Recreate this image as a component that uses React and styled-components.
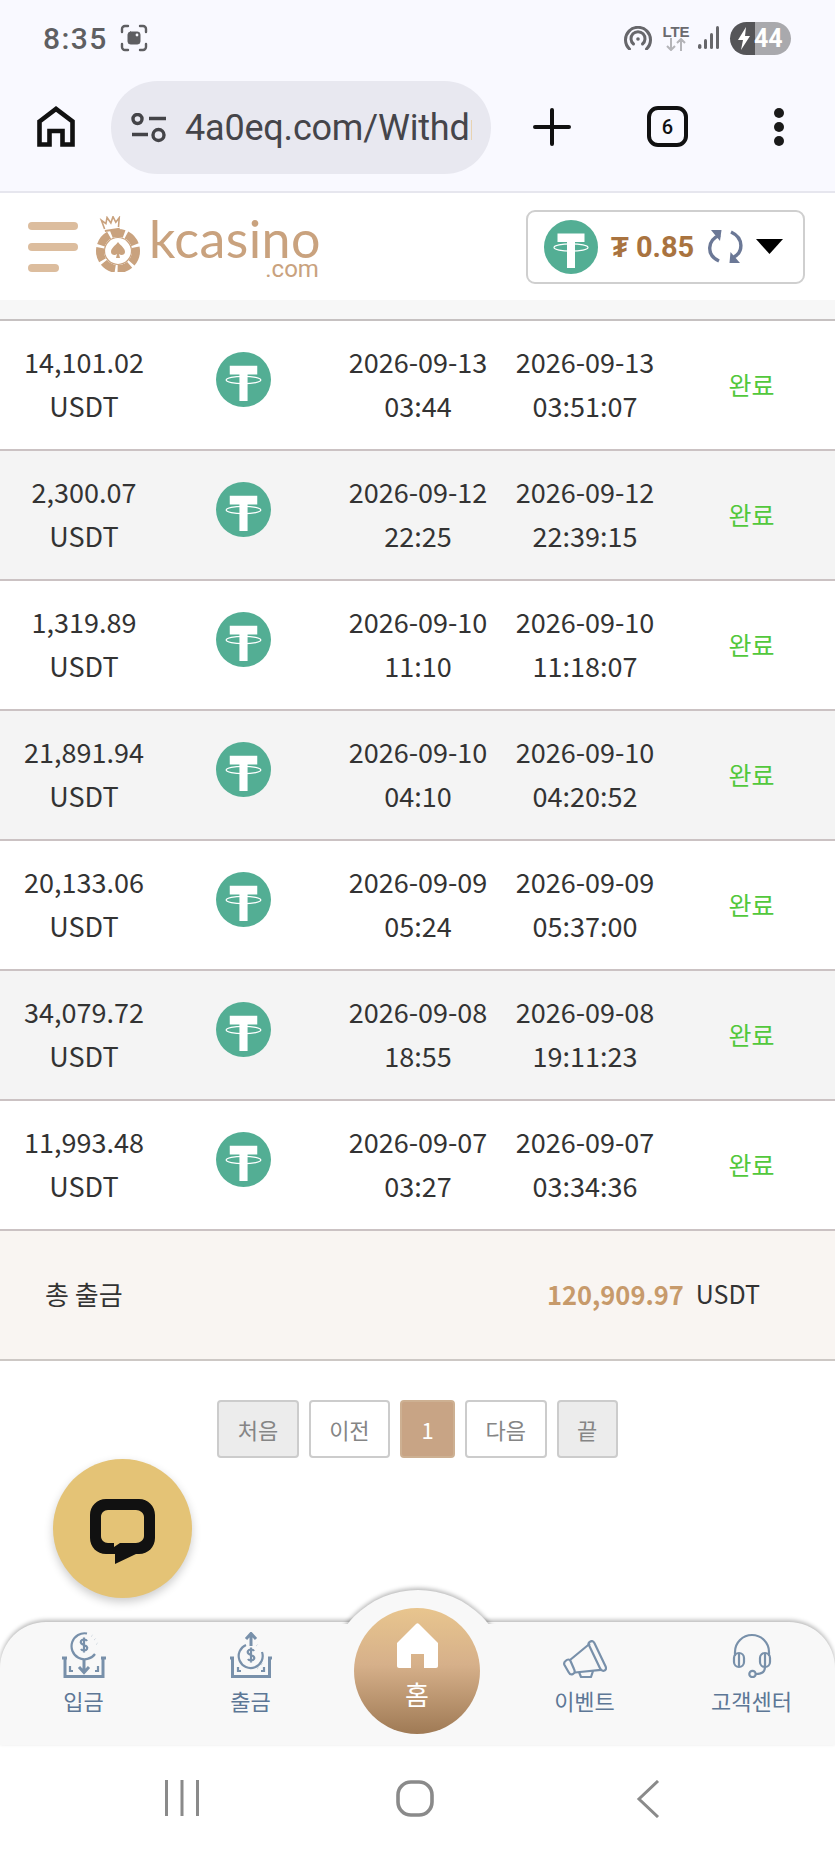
import React from 'react'
import styled, { createGlobalStyle } from 'styled-components'

const GlobalStyle = createGlobalStyle`
  * { box-sizing: border-box; }
  html, body { margin: 0; padding: 0; background: #fff; }
  body { font-family: "Noto Sans CJK KR", "Noto Sans", sans-serif; }
`

const Page = styled.div`
  position: relative;
  width: 835px;
  height: 1856px;
  display: flex;
  flex-direction: column;
  overflow: hidden;
  background: #fff;
`

/* phone status bar */
const StatusBar = styled.div`
  height: 70px;
  flex: none;
  display: flex;
  align-items: center;
  padding: 6px 44px 0 43px;
  background: #f9f9ff;
`
const Time = styled.span`
  font: 500 30px Roboto, sans-serif;
  letter-spacing: 1.4px;
  color: #5f5f62;
  margin-right: 12px;
`
const StatusRight = styled.div`
  margin-left: auto;
  display: flex;
  align-items: center;
`
const Lte = styled.div`
  width: 26px;
  margin: 0 9px 0 11px;
  display: flex;
  flex-direction: column;
  align-items: center;
  font: 700 15px/13px "Liberation Sans", sans-serif;
  color: #6a6a6e;
`
const Battery = styled.div`
  width: 61px;
  height: 33px;
  margin-left: 10px;
  border-radius: 17px;
  display: flex;
  align-items: center;
  padding-left: 7px;
  gap: 3px;
  color: #fff;
  font: 700 25px Roboto, sans-serif;
  background: linear-gradient(to right, #555558 0 41%, #a9a9ad 41%);
`

/* browser toolbar */
const Toolbar = styled.div`
  height: 123px;
  flex: none;
  display: flex;
  align-items: center;
  padding: 0 0 8px 37px;
  background: #f9f9ff;
  border-bottom: 2px solid #e6e6ee;
`
const UrlPill = styled.div`
  width: 380px;
  height: 93px;
  margin-left: 36px;
  margin-top: 2px;
  border-radius: 47px;
  background: #e8e8f0;
  display: flex;
  align-items: center;
  padding-left: 20px;
`
const UrlText = styled.div`
  width: 287px;
  margin-left: 18px;
  overflow: hidden;
  white-space: nowrap;
  font: 400 36px Roboto, sans-serif;
  letter-spacing: -0.2px;
  color: #45454a;
`
const PlusSlot = styled.div`
  margin-left: 42px;
  display: flex;
`
const TabCount = styled.div`
  width: 41px;
  height: 41px;
  margin-left: 76px;
  border: 4px solid #111;
  border-radius: 11px;
  display: flex;
  align-items: center;
  justify-content: center;
  font: 500 20px Roboto, sans-serif;
  color: #111;
`
const MenuDots = styled.div`
  margin-left: 86px;
  display: flex;
  flex-direction: column;
  gap: 4px;
  span {
    display: block;
    width: 10px;
    height: 10px;
    border-radius: 50%;
    background: #1a1a1a;
  }
`

/* site header */
const Header = styled.header`
  height: 107px;
  flex: none;
  display: flex;
  align-items: center;
  padding: 0 30px 0 28px;
  background: #fff;
`
const Burger = styled.div`
  width: 50px;
  display: flex;
  flex-direction: column;
  gap: 13px;
`
const BurgerBar = styled.span`
  display: block;
  height: 8px;
  border-radius: 4px;
  width: ${p => p.$short ? '31px' : '50px'};
  background: #dcbd9e;
`
const Logo = styled.div`
  margin-left: 17px;
  display: flex;
  align-items: flex-start;
  gap: 8px;
  color: #c9a27e;
`
const LogoWords = styled.div`
  display: flex;
  flex-direction: column;
  align-items: flex-end;
`
const LogoName = styled.span`
  font: 400 52px/44px Lato, sans-serif;
  letter-spacing: 0.4px;
`
const LogoTld = styled.span`
  font: 400 24px/18px Roboto, sans-serif;
  margin-right: 2px;
`
const Balance = styled.div`
  margin-left: auto;
  width: 279px;
  height: 74px;
  border: 2px solid #cfcfcf;
  border-radius: 9px;
  display: flex;
  align-items: center;
  padding-left: 16px;
`
const BalanceValue = styled.span`
  margin-left: 13px;
  font: 700 29px Roboto, sans-serif;
  color: #a9733f;
  white-space: nowrap;
`
const RefreshSvg = styled.svg`
  margin-left: 14px;
  flex: none;
`
const CaretSvg = styled.svg`
  margin-left: 13px;
  flex: none;
`
const GreyStrip = styled.div`
  height: 19px;
  flex: none;
  background: #f7f7f7;
  border-bottom: 2px solid #c6c1c1;
  box-sizing: content-box;
`

/* withdraw rows */
const Row = styled.div`
  height: 130px;
  flex: none;
  display: grid;
  grid-template-columns: 168px 150px 200px 134px 1fr;
  align-items: center;
  border-bottom: 2px solid #cbc2c3;
  background: ${p => p.$alt ? '#f4f4f4' : '#fff'};
  color: #333;
`
const Cell = styled.div`
  display: flex;
  flex-direction: column;
  align-items: center;
  padding-bottom: 3px;
  font-size: 27px;
  line-height: 44px;
  font-weight: 400;
  white-space: nowrap;
`
const CoinCell = styled.div`
  display: flex;
  justify-content: center;
  margin-bottom: 12px;
`
const Done = styled.div`
  padding: 0 0 2px 16px;
  text-align: center;
  font-size: 25px;
  color: #52c83c;
`

const Summary = styled.div`
  height: 130px;
  flex: none;
  display: flex;
  align-items: center;
  justify-content: space-between;
  padding: 0 75px 4px 45px;
  background: #f9f5f2;
  border-bottom: 2px solid #cdc8c5;
  color: #333;
  font-size: 26px;
`
const SummaryAmount = styled.div`
  display: flex;
  align-items: center;
  gap: 12px;
  font-size: 25px;
  b {
    font-size: 25.500px;
    font-weight: 700;
    color: #c79a6b;
  }
`

const Pager = styled.div`
  margin-top: 39px;
  flex: none;
  display: flex;
  justify-content: center;
  gap: 10px;
`
const PageBtn = styled.div`
  height: 58px;
  min-width: ${p => p.$active ? '55px' : '0'};
  padding: 0 18.500px;
  display: flex;
  align-items: center;
  justify-content: center;
  border: 2px solid ${p => p.$active ? '#cdb092' : '#cccccc'};
  border-radius: 4px;
  font-size: 22px;
  color: ${p => p.$active ? '#fff' : '#858585'};
  background: ${p => p.$active ? '#c8a485' : p.$muted ? '#ececec' : '#fff'};
`

const ChatButton = styled.div`
  position: absolute;
  left: 53px;
  top: 1459px;
  width: 139px;
  height: 139px;
  border-radius: 50%;
  background: #e4c376;
  box-shadow: 0 4px 10px rgba(0, 0, 0, 0.2);
  display: flex;
  align-items: center;
  justify-content: center;
  padding-top: 5px;
`

/* bottom navigation */
const BottomNav = styled.nav`
  position: relative;
  margin-top: auto;
  height: 123px;
  flex: none;
  display: grid;
  grid-template-columns: repeat(5, 1fr);
  border-radius: 46px 46px 0 0;
  background: #f8f8f8;
  box-shadow: 0 -2px 4px rgba(0, 0, 0, 0.28);
`
const BumpClip = styled.div`
  position: absolute;
  left: 50%;
  top: -40px;
  width: 200px;
  height: 42px;
  margin-left: -100px;
  overflow: hidden;
  &::before {
    content: "";
    display: block;
    width: 180px;
    height: 180px;
    margin: 8px 0 0 10px;
    border-radius: 50%;
    background: #f8f8f8;
    box-shadow: 0 -2px 4px rgba(0, 0, 0, 0.28);
  }
`
const NavItem = styled.div`
  display: flex;
  flex-direction: column;
  align-items: center;
  height: 100%;
  padding-top: 10px;
  color: #5d7796;
  font-size: 22px;
  line-height: 30px;
`
const NavIcon = styled.div`
  height: 46px;
  margin-bottom: 7px;
  display: flex;
  align-items: flex-end;
`
const HomeBubble = styled.div`
  position: absolute;
  left: 50%;
  top: -14px;
  width: 126px;
  height: 126px;
  margin-left: -63.500px;
  padding-top: 15px;
  border-radius: 50%;
  background: linear-gradient(180deg, #e8c58e 0%, #d6b08a 45%, #9f7a55 100%);
  display: flex;
  flex-direction: column;
  align-items: center;
  gap: 11px;
  color: #fff;
  font-size: 26px;
  line-height: 30px;
`

const SystemNav = styled.div`
  height: 111px;
  flex: none;
  display: flex;
  justify-content: center;
  align-items: flex-start;
  gap: 173px;
  padding: 35px 5px 0 0;
  background: #fff;
`
const SystemSlot = styled.div`
  width: 60px;
  display: flex;
  justify-content: center;
`

const TetherIcon = ({ size = 55 }) => (
  <svg width={size} height={size} viewBox="0 0 54 54">
    <circle cx="27" cy="27" r="27" fill="#53ae94" />
    <path d="M13.500 13.500h27v8.500H31v26h-8V22h-9.500z" fill="#fff" />
    <ellipse cx="27" cy="27.500" rx="17" ry="3.600" fill="none" stroke="#fff" strokeWidth="1.200" />
  </svg>
)

const ScreenshotIcon = () => (
  <svg width="28" height="28" viewBox="0 0 28 28" fill="none" stroke="#5f5f62" strokeWidth="2.400" strokeLinecap="round">
    <path d="M2 8V5a3 3 0 0 1 3-3h3M20 2h3a3 3 0 0 1 3 3v3M26 20v3a3 3 0 0 1-3 3h-3M8 26H5a3 3 0 0 1-3-3v-3" />
    <rect x="8" y="8" width="12" height="12" rx="2.500" fill="#5f5f62" strokeWidth="1" />
    <circle cx="17" cy="11" r="1.400" fill="#f9f9ff" stroke="none" />
  </svg>
)

const HotspotIcon = () => (
  <svg width="28" height="24" viewBox="0 0 28 24" fill="none" stroke="#67676b" strokeWidth="3" strokeLinecap="round">
    <path d="M5.500 23A12.500 12.500 0 1 1 22.500 23" />
    <path d="M9.500 18A7 7 0 1 1 18.500 18" />
    <circle cx="14" cy="13" r="1.800" fill="#67676b" stroke="none" />
  </svg>
)

const LteArrows = () => (
  <svg width="20" height="13" viewBox="0 0 20 13" fill="none" stroke="#b4b4b8" strokeWidth="2">
    <path d="M5 0v12M1 8l4 4 4-4M15 13V1M11 5l4-4 4 4" />
  </svg>
)

const SignalIcon = () => (
  <svg width="22" height="24" viewBox="0 0 22 24" fill="#67676b">
    <rect x="0" y="18" width="3.400" height="5" rx="1.700" />
    <rect x="6" y="13" width="3" height="10" rx="1.500" />
    <rect x="12" y="7" width="3" height="16" rx="1.500" />
    <rect x="18" y="0" width="3" height="23" rx="1.500" />
  </svg>
)

const BoltIcon = () => (
  <svg width="14" height="23" viewBox="0 0 14 23" fill="#fff">
    <path d="M9 0 1 13h5l-2 10 9-14H8z" />
  </svg>
)

const OutlineHome = () => (
  <svg width="38" height="41" viewBox="0 0 38 41" fill="none" stroke="#111" strokeWidth="4.600">
    <path d="M2.500 15.500 19 3l16.500 12.500V38.500H25.500V25h-13v13.500H2.500z" />
  </svg>
)

const SiteInfoIcon = () => (
  <svg width="36" height="30" viewBox="0 0 36 30" fill="none" stroke="#444448" strokeWidth="3.400">
    <circle cx="6.500" cy="6" r="4.500" />
    <path d="M18 5.500h17M1 21.500h16" />
    <circle cx="27.500" cy="22" r="5.500" />
  </svg>
)

const PlusIcon = () => (
  <svg width="38" height="38" viewBox="0 0 38 38" stroke="#111" strokeWidth="4" strokeLinecap="round">
    <path d="M19 2v34M2 19h34" />
  </svg>
)

const ChipLogo = () => (
  <svg width="46" height="56" viewBox="0 0 46 56" fill="none">
    <g transform="rotate(-8 16 8)" stroke="#c9a27e" strokeWidth="1.600">
      <path d="M9 12 7 3l4 4 2-6 3 6 3-6 2 6 4-4-2 9" />
      <path d="M9 14h15" strokeWidth="2" />
    </g>
    <circle cx="23" cy="35" r="18" stroke="#c9a27e" strokeWidth="8" strokeDasharray="13 2.500" />
    <circle cx="23" cy="35" r="14" fill="#fff" />
    <circle cx="23" cy="35" r="13.500" stroke="#c9a27e" strokeWidth="1.200" />
    <path d="M23 26c3 4 7 6 7 10 0 3-4 4-6 2l1 4h-4l1-4c-2 2-6 1-6-2 0-4 4-6 7-10z" fill="#c9a27e" />
  </svg>
)

const RefreshIcon = () => (
  <RefreshSvg width="35" height="35" viewBox="0 0 35 35" fill="none" stroke="#6b7896" strokeWidth="3.400">
    <path d="M12 6C-1 11-2 26 11 32" />
    <path d="M23 3c13 6 13 21 1 26" />
    <path d="M3 1h10.500l-1.500 11z" fill="#6b7896" stroke="none" />
    <path d="M32 34H21.500l1-11z" fill="#6b7896" stroke="none" />
  </RefreshSvg>
)

const CaretIcon = () => (
  <CaretSvg width="27" height="15" viewBox="0 0 27 15">
    <path d="M0 0h27L13.500 15z" fill="#000" />
  </CaretSvg>
)

const ChatIcon = () => (
  <svg width="65" height="65" viewBox="0 0 65 65">
    <path
      fillRule="evenodd"
      fill="#111"
      d="M16 0h33c9 0 16 7 16 16v23c0 9-7 16-16 16h-3L25 65V55h-9C7 55 0 48 0 39V16C0 7 7 0 16 0zM18 11c-4 0-7 3-7 7v19c0 4 3 7 7 7h6v4l6-4h16c4 0 8-3 8-7V18c0-4-4-7-8-7z"
    />
  </svg>
)

const navStroke = { fill: 'none', stroke: '#7890aa', strokeWidth: 2.2 }

const DepositIcon = () => (
  <svg width="44" height="46" viewBox="0 0 44 46" {...navStroke}>
    <path d="M25 1.500A13 13 0 1 0 33 22" />
    <path d="M30 3.500l.1.1M33 7l.1.1M35 11.500l.1.1" strokeWidth="3" />
    <path d="M25 9c-1-2-5-2-6 0s1 3.500 3 4 4 2 3 4-5 2-6 0M22 5.500v15" />
    <path d="M22 27v13M17 35l5 5.500 5-5.500" strokeWidth="3" />
    <path d="M0 26h5M39 26h5M3 26v18.500h38V26" strokeWidth="3" />
    <path d="M8 34v5h3M36 34v5h-3" />
  </svg>
)

const WithdrawIcon = () => (
  <svg width="42" height="46" viewBox="0 0 42 46" {...navStroke}>
    <path d="M21 14V2M16 7l5-5.500L26 7" strokeWidth="3" />
    <path d="M16 13a12 12 0 1 0 16 7" />
    <path d="M27 13l.1.1M32 32l.1.1M28 36l.1.1" strokeWidth="3" />
    <path d="M24 19c-1-2-5-2-6 0s1 3.500 3 4 4 2 3 4-5 2-6 0M21 15.500v15" />
    <path d="M0 26h4M38 26h4M2.500 26v18.500h37V26" strokeWidth="3" />
    <path d="M8 35v4h3M34 35v4h-3" />
  </svg>
)

const MegaphoneIcon = () => (
  <svg width="44" height="38" viewBox="0 0 44 38" {...navStroke} strokeLinejoin="round">
    <path d="M27 1.800c2-1.500 3.500-.5 4.500 1.500l11 23c1 2 .5 4-1.500 4.500s-3-.5-4-2.500l-11-23c-1-1.500-.5-2.800 1-3.500z" />
    <path d="M27 3.500 7 20M38 29.800 12 32.500" />
    <path d="M2.500 21c2-2 4-2 5 0l3.500 8c1 2 1 4-1 5s-3.500 0-4.500-2L1.500 25c-.7-1.500-.2-3 1-4z" />
    <path d="M16 32l2 5h10l2-6" />
  </svg>
)

const HeadsetIcon = () => (
  <svg width="40" height="46" viewBox="0 0 40 46" {...navStroke}>
    <path d="M3 24V20a17 17 0 0 1 34 0v4" />
    <rect x="2" y="21" width="10" height="14" rx="5" />
    <path d="M7 22v12" />
    <rect x="28" y="21" width="10" height="14" rx="5" />
    <path d="M33 22v12" />
    <path d="M33 35c0 5-4 7-9 7" />
    <circle cx="20.500" cy="42" r="3.200" />
  </svg>
)

const SolidHome = () => (
  <svg width="41" height="45" viewBox="0 0 41 45">
    <path d="M19 1c1-1 2-1 3 0l19 19v23c0 1-1 2-2 2H27V31H14v14H2c-1 0-2-1-2-2V20z" fill="#fff" />
  </svg>
)

const RecentsIcon = () => (
  <svg width="34" height="36" viewBox="0 0 34 36" fill="#8a8a8a">
    <rect x="0" y="0" width="3" height="36" />
    <rect x="15.500" y="0" width="3" height="36" />
    <rect x="31" y="0" width="3" height="36" />
  </svg>
)

const HomeSoftIcon = () => (
  <svg width="38" height="37" viewBox="0 0 38 37" fill="none" stroke="#8a8a8a" strokeWidth="3.600">
    <rect x="2" y="2" width="34" height="33" rx="13" />
  </svg>
)

const BackIcon = () => (
  <svg width="24" height="38" viewBox="0 0 24 38" fill="none" stroke="#8a8a8a" strokeWidth="3">
    <path d="M22 1 3 19l19 18" />
  </svg>
)

const rows = [
  ['14,101.02', '2026-09-13', '03:44', '03:51:07'],
  ['2,300.07', '2026-09-12', '22:25', '22:39:15'],
  ['1,319.89', '2026-09-10', '11:10', '11:18:07'],
  ['21,891.94', '2026-09-10', '04:10', '04:20:52'],
  ['20,133.06', '2026-09-09', '05:24', '05:37:00'],
  ['34,079.72', '2026-09-08', '18:55', '19:11:23'],
  ['11,993.48', '2026-09-07', '03:27', '03:34:36'],
]

const App = () => {
  return (
    <Page>
      <GlobalStyle />
      <StatusBar>
        <Time>8:35</Time>
        <ScreenshotIcon />
        <StatusRight>
          <HotspotIcon />
          <Lte>LTE<LteArrows /></Lte>
          <SignalIcon />
          <Battery><BoltIcon />44</Battery>
        </StatusRight>
      </StatusBar>

      <Toolbar>
        <OutlineHome />
        <UrlPill>
          <SiteInfoIcon />
          <UrlText>4a0eq.com/Withdraw</UrlText>
        </UrlPill>
        <PlusSlot><PlusIcon /></PlusSlot>
        <TabCount>6</TabCount>
        <MenuDots><span /><span /><span /></MenuDots>
      </Toolbar>

      <Header>
        <Burger>
          <BurgerBar />
          <BurgerBar />
          <BurgerBar $short />
        </Burger>
        <Logo>
          <ChipLogo />
          <LogoWords>
            <LogoName>kcasino</LogoName>
            <LogoTld>.com</LogoTld>
          </LogoWords>
        </Logo>
        <Balance>
          <TetherIcon size={54} />
          <BalanceValue>₮ 0.85</BalanceValue>
          <RefreshIcon />
          <CaretIcon />
        </Balance>
      </Header>
      <GreyStrip />

      {rows.map((r, i) => (
        <Row key={r[0]} $alt={i % 2 === 1}>
          <Cell><span>{r[0]}</span><span>USDT</span></Cell>
          <CoinCell><TetherIcon /></CoinCell>
          <Cell><span>{r[1]}</span><span>{r[2]}</span></Cell>
          <Cell><span>{r[1]}</span><span>{r[3]}</span></Cell>
          <Done>완료</Done>
        </Row>
      ))}

      <Summary>
        <span>총 출금</span>
        <SummaryAmount><b>120,909.97</b> USDT</SummaryAmount>
      </Summary>

      <Pager>
        <PageBtn $muted>처음</PageBtn>
        <PageBtn>이전</PageBtn>
        <PageBtn $active>1</PageBtn>
        <PageBtn>다음</PageBtn>
        <PageBtn $muted>끝</PageBtn>
      </Pager>

      <ChatButton><ChatIcon /></ChatButton>

      <BottomNav>
        <BumpClip />
        <NavItem><NavIcon><DepositIcon /></NavIcon>입금</NavItem>
        <NavItem><NavIcon><WithdrawIcon /></NavIcon>출금</NavItem>
        <div />
        <NavItem><NavIcon><MegaphoneIcon /></NavIcon>이벤트</NavItem>
        <NavItem><NavIcon><HeadsetIcon /></NavIcon>고객센터</NavItem>
        <HomeBubble><SolidHome />홈</HomeBubble>
      </BottomNav>

      <SystemNav>
        <SystemSlot><RecentsIcon /></SystemSlot>
        <SystemSlot><HomeSoftIcon /></SystemSlot>
        <SystemSlot><BackIcon /></SystemSlot>
      </SystemNav>
    </Page>
  )
}

export default App
